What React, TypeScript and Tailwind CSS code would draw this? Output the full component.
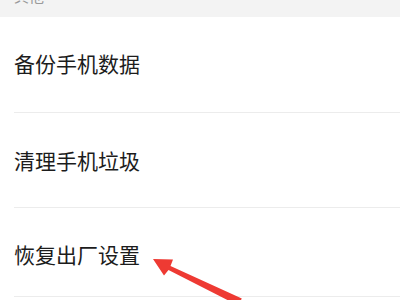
import React from 'react';

const items = ['备份手机数据', '清理手机垃圾', '恢复出厂设置'];

export default function App() {
    return (
        <div
            className="relative w-[400px] h-[300px] overflow-hidden bg-white"
            style={{ fontFamily: '"Noto Sans CJK SC", "Noto Sans", sans-serif' }}
        >
            <div className="h-[17px] bg-[#f3f3f3] overflow-hidden pl-[14px]">
                <p className="-mt-[14px] text-[15px] leading-[20px] text-[#9a9a9a]">其他</p>
            </div>
            <div className="flex flex-col">
                {items.map((label, i) => (
                    <div key={label} className={`ml-[14px] flex items-center border-b border-[#ececec] ${i === 0 ? 'h-[96px] pb-[3px]' : i === 2 ? 'h-[89px] pt-[4px]' : 'h-[95px]'}`}>
                        <span className="text-[21px] leading-none text-[#1c1c1c]">{label}</span>
                    </div>
                ))}
            </div>
            <svg className="absolute left-0 top-0" width="400" height="300" viewBox="0 0 400 300">
                <polygon
                    points="153,259 173,259.5 170.5,266 241.8,298.5 238.2,305.5 168.5,270 164,275.5"
                    fill="#ee3a33"
                />
            </svg>
        </div>
    );
}
